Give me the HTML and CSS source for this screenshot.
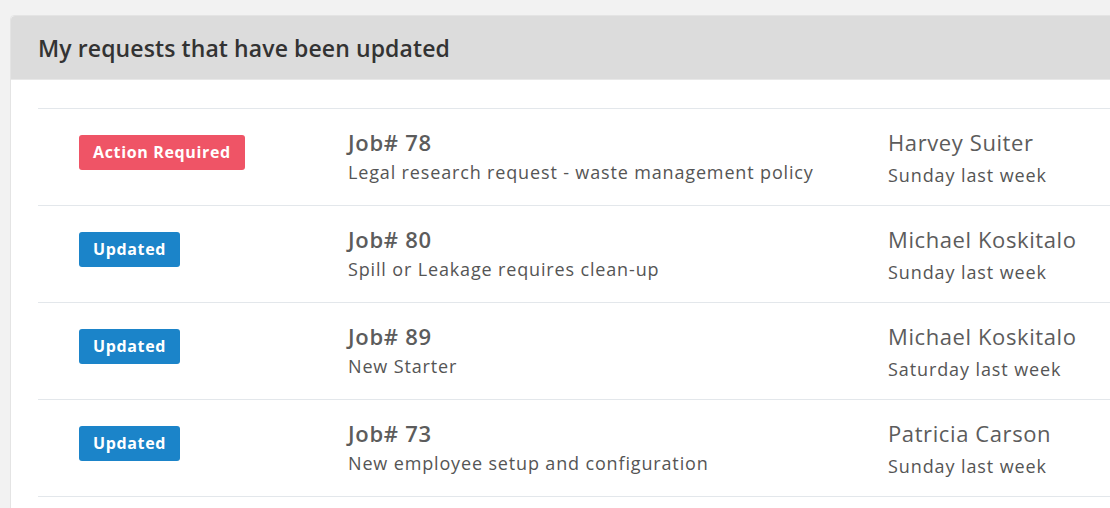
FILE: index.html
```html
<!DOCTYPE html>
<html lang="en">
<head>
  <meta charset="UTF-8" />
  <title>My requests</title>
  <link rel="stylesheet" href="styles.css">
</head>
<body>
  <div class="panel">
    <div class="panel-heading">My requests that have been updated</div>
    <div class="panel-body">
      <div class="request-list">

        <div class="request">
          <div class="col-status"><span class="badge badge-danger">Action Required</span></div>
          <div class="col-job">
            <div class="job-no">Job# 78</div>
            <div class="job-title">Legal research request - waste management policy</div>
          </div>
          <div class="col-user">
            <div class="user-name">Harvey Suiter</div>
            <div class="when">Sunday last week</div>
          </div>
        </div>

        <div class="request">
          <div class="col-status"><span class="badge badge-info">Updated</span></div>
          <div class="col-job">
            <div class="job-no">Job# 80</div>
            <div class="job-title">Spill or Leakage requires clean-up</div>
          </div>
          <div class="col-user">
            <div class="user-name">Michael Koskitalo</div>
            <div class="when">Sunday last week</div>
          </div>
        </div>

        <div class="request">
          <div class="col-status"><span class="badge badge-info">Updated</span></div>
          <div class="col-job">
            <div class="job-no">Job# 89</div>
            <div class="job-title">New Starter</div>
          </div>
          <div class="col-user">
            <div class="user-name">Michael Koskitalo</div>
            <div class="when">Saturday last week</div>
          </div>
        </div>

        <div class="request">
          <div class="col-status"><span class="badge badge-info">Updated</span></div>
          <div class="col-job">
            <div class="job-no">Job# 73</div>
            <div class="job-title">New employee setup and configuration</div>
          </div>
          <div class="col-user">
            <div class="user-name">Patricia Carson</div>
            <div class="when">Sunday last week</div>
          </div>
        </div>

      </div>
    </div>
  </div>
</body>
</html>
```

FILE: styles.css
```css
html {
  overflow: hidden;
}

body {
  margin: 0;
  padding: 15px 0 0 10px;
  font-family: 'Open Sans', sans-serif;
  background-color: #f2f2f2;
  color: #555;
}

.panel {
  width: 1200px;
  background: white;
  border: 1px solid #e4e4e4;
  border-radius: 4px 0 0 0;
  min-height: 600px;
  box-sizing: border-box;
}

.panel-heading {
  background-color: #dcdcdc;
  border-bottom: 1px solid #e8e8e8;
  border-radius: 4px 0 0 0;
  height: 63px;
  padding: 0 27px;
  font-size: 23px;
  font-weight: 600;
  line-height: 64px;
  letter-spacing: 0.1px;
  color: #333;
}

.panel-body {
  padding: 28px 0 0 27px;
}

.request-list {
  border-top: 1px solid #e3e7eb;
}

.request {
  display: flex;
  align-items: flex-start;
  height: 96px;
  border-bottom: 1px solid #e3e7eb;
  padding-left: 41px;
}

.col-status {
  width: 269px;
  padding-top: 26px;
}

.col-job {
  width: 540px;
  padding-top: 18px;
}

.col-user {
  padding-top: 18px;
}

.badge {
  display: inline-block;
  padding: 8px 14px;
  font-size: 16px;
  font-weight: 700;
  line-height: 19px;
  letter-spacing: 0.65px;
  color: white;
  border-radius: 3px;
}

.badge-danger {
  background-color: #ef5466;
}

.badge-info {
  background-color: #1b84c9;
}

.job-no {
  font-size: 22px;
  font-weight: 600;
  line-height: 30px;
  letter-spacing: 0.7px;
  color: #5c5c5c;
}

.job-title {
  font-size: 18px;
  line-height: 30px;
  letter-spacing: 0.85px;
  color: #555;
}

.user-name {
  font-size: 22px;
  line-height: 30px;
  letter-spacing: 0.6px;
  color: #5c5c5c;
}

.when {
  font-size: 18px;
  line-height: 30px;
  margin-top: 3px;
  letter-spacing: 0.9px;
  color: #555;
}
```
